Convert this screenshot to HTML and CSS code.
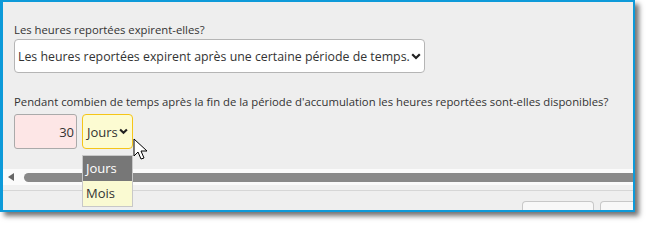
FILE: index.html
```html
<!DOCTYPE html>
<html lang="fr">
<head>
<meta charset="utf-8">
<link rel="stylesheet" href="styles.css">
</head>
<body>
<div class="window">
  <div class="content">
    <div class="label">Les heures reportées expirent-elles?</div>
    <div class="select big">
      <span class="txt">Les heures reportées expirent après une certaine période de temps.</span>
      <svg class="chev" width="10" height="7" viewBox="0 0 10 7"><path d="M1.2 1.2 L5 5 L8.8 1.2" fill="none" stroke="#222" stroke-width="2.2"/></svg>
    </div>
    <div class="label second">Pendant combien de temps après la fin de la période d'accumulation les heures reportées sont-elles disponibles?</div>
    <div class="row">
      <div class="num">30</div>
      <div class="select unit">
        <span>Jours</span>
        <svg class="chev" width="9" height="7" viewBox="0 0 10 7"><path d="M1.2 1.2 L5 5 L8.8 1.2" fill="none" stroke="#222" stroke-width="2.3"/></svg>
      </div>
    </div>
  </div>
  <div class="track">
    <svg class="arrow" width="6" height="8" viewBox="0 0 6 8"><path d="M6 0 L0 4 L6 8 Z" fill="#666"/></svg>
    <div class="thumb"></div>
  </div>
  <div class="gap"></div>
  <div class="footer">
    <div class="btn b1"></div>
    <div class="btn b2"></div>
  </div>
</div>
<ul class="menu">
  <li class="sel">Jours</li>
  <li>Mois</li>
</ul>
<svg class="cursor" width="16" height="24" viewBox="0 0 16 24"><path d="M1 1 L1 18 L5 14 L8 21 L11 20 L8 13 L14 13 Z" fill="#fff" stroke="#000" stroke-width="1" stroke-linejoin="round"/></svg>
</body>
</html>
```
FILE: styles.css
```css
html, body { margin: 0; padding: 0; background: #fff; }
body { font-family: "Open Sans", "Noto Sans", sans-serif; color: #333; position: relative; width: 649px; height: 226px; overflow: hidden; }
.window {
  width: 630px; height: 208px;
  border-style: solid; border-color: #0d9ad9;
  border-width: 2px 2px 2px 3px;
  background: #eeeeee;
  box-shadow: 4px 4px 5px rgba(0,0,0,0.55);
  display: flex; flex-direction: column; overflow: hidden;
}
.content { padding: 20px 0 0 11px; height: 145px; box-sizing: border-box; }
.label { font-size: 11.3px; line-height: 16px; color: #333; white-space: nowrap; }
.select {
  display: flex; align-items: center; justify-content: space-between;
  box-sizing: border-box; border-radius: 4px;
}
.big {
  margin-top: 1px; width: 411px; height: 34px; background: #fff;
  border: 1px solid #b5b5b5; padding: 0 3px 0 3px;
  font-size: 12.35px; color: #333;
}
.txt { white-space: nowrap; }
.chev { flex: none; }
.second { margin-top: 21px; }
.row { display: flex; gap: 5px; margin-top: 4px; }
.num {
  width: 63px; height: 35px; box-sizing: border-box;
  background: #fde6e6; border: 1px solid #aaa; border-radius: 3px;
  display: flex; align-items: center; justify-content: flex-end; padding-right: 2px;
  font-size: 13px; color: #333;
}
.unit {
  width: 51px; height: 35px; background: #fcfbd2; border: 1px solid #f5c518;
  padding: 0 4px 0 4px; font-size: 13px; color: #333;
}
.track {
  margin-top: 22px; height: 16px; background: #fbfbfb;
  display: flex; align-items: center; padding-left: 5px; gap: 10px;
}
.arrow { flex: none; }
.thumb { flex: 1; height: 9px; background: #8a8a8a; border-radius: 5px 0 0 5px; }
.gap { height: 5px; background: #f1f1f1; border-bottom: 1px solid #d6d6d6; }
.footer { flex: 1; display: flex; align-items: flex-end; padding-left: 519px; gap: 6px; background: #efefef; overflow: hidden; }
.btn { flex: none; height: 8px; background: #f8f8f8; border: 1px solid #c8c8c8; border-bottom: none; border-radius: 4px 4px 0 0; }
.b1 { width: 70px; }
.b2 { width: 40px; }
.menu {
  position: absolute; left: 82px; top: 155px; margin: 0; padding: 0; list-style: none;
  width: 51px; box-sizing: border-box; border: 1px solid #c8c8c8; background: #fafad2;
  font-size: 13px;
}
.menu li { height: 25px; line-height: 25px; padding-left: 3px; color: #333; }
.menu li.sel { background: #777; color: #fff; }
.cursor { position: absolute; left: 133px; top: 138px; }
```
